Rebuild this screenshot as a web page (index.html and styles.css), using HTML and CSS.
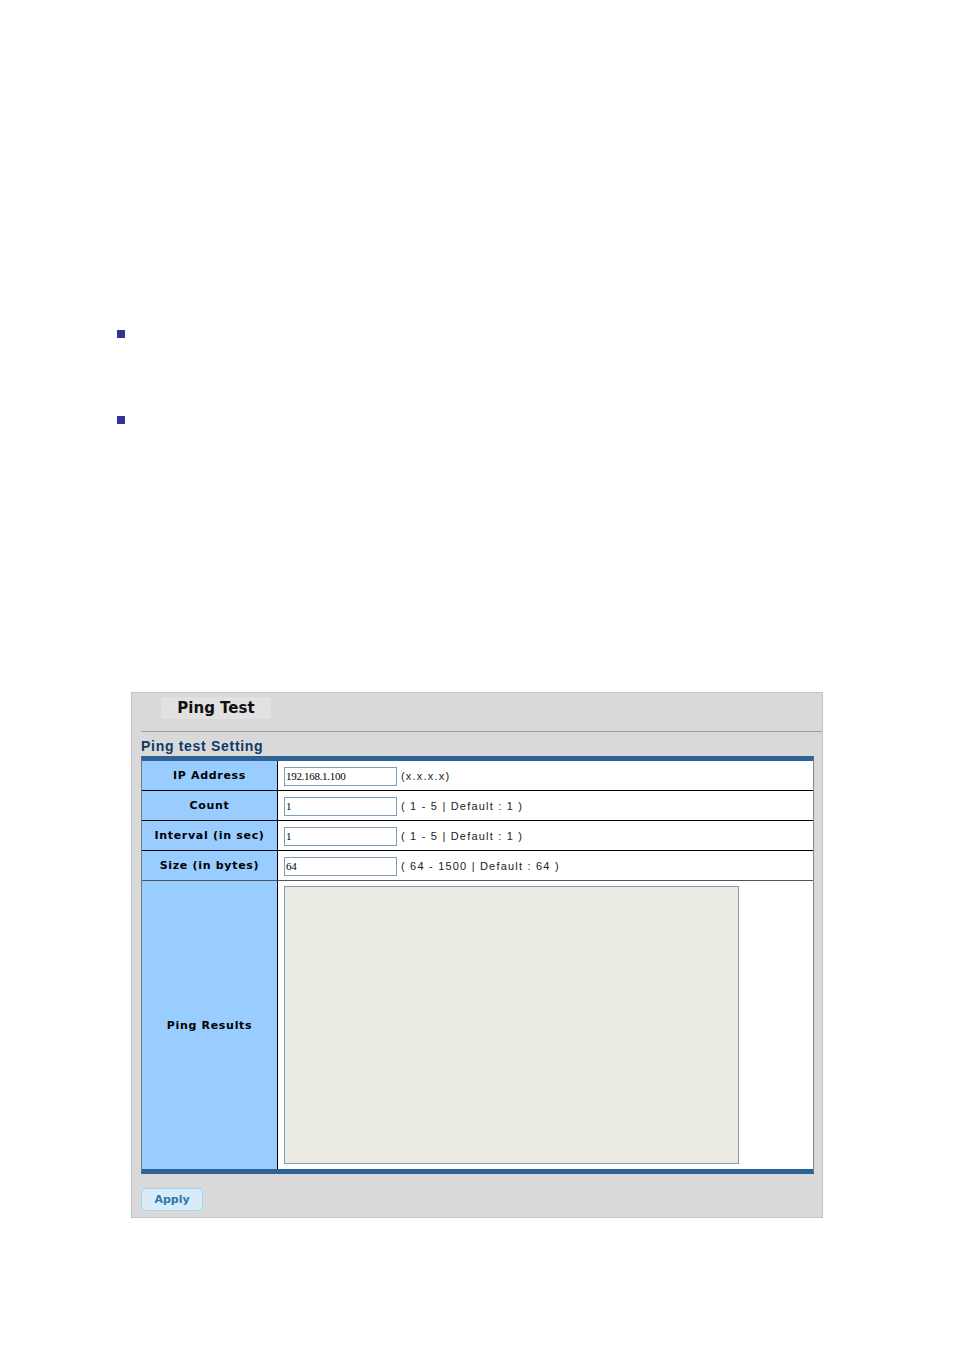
FILE: index.html
```html
<!DOCTYPE html>
<html>
<head>
<meta charset="utf-8">
<link rel="stylesheet" href="styles.css">
</head>
<body>
<div class="page">
  <div class="bullets">
    <span class="bullet"></span>
    <span class="bullet"></span>
  </div>
  <div class="panel">
    <div class="tab">Ping Test</div>
    <div class="sep"></div>
    <div class="heading">Ping test Setting</div>
    <table class="grid">
      <tr>
        <td class="lbl">IP Address</td>
        <td class="val"><input class="fld" type="text" value="192.168.1.100"><span class="hint">(x.x.x.x)</span></td>
      </tr>
      <tr>
        <td class="lbl">Count</td>
        <td class="val"><input class="fld" type="text" value="1"><span class="hint">( 1 - 5 | Default : 1 )</span></td>
      </tr>
      <tr>
        <td class="lbl">Interval (in sec)</td>
        <td class="val"><input class="fld" type="text" value="1"><span class="hint">( 1 - 5 | Default : 1 )</span></td>
      </tr>
      <tr class="pre">
        <td class="lbl">Size (in bytes)</td>
        <td class="val"><input class="fld" type="text" value="64"><span class="hint">( 64 - 1500 | Default : 64 )</span></td>
      </tr>
      <tr class="last">
        <td class="lbl">Ping Results</td>
        <td class="val res"><textarea class="out"></textarea></td>
      </tr>
    </table>
    <button class="apply" type="button">Apply</button>
  </div>
</div>
</body>
</html>
```
FILE: styles.css
```css
html, body {
  margin: 0;
  padding: 0;
  background: #ffffff;
}
.page {
  padding-top: 330px;
  font-family: "DejaVu Sans", Verdana, sans-serif;
}
.bullets {
  margin-left: 117px;
  display: flex;
  flex-direction: column;
  gap: 78px;
}
.bullet {
  display: block;
  width: 8px;
  height: 8px;
  background: #333399;
}
.panel {
  margin-top: 268px;
  margin-left: 131px;
  width: 690px;
  background: #d9d9d9;
  border: 1px solid #c4c4c4;
  display: flex;
  flex-direction: column;
  align-items: flex-start;
}
.tab {
  margin-top: 4px;
  margin-left: 29px;
  width: 110px;
  height: 22px;
  line-height: 22px;
  background: #e1e1e1;
  text-align: center;
  font-family: "DejaVu Sans", Verdana, sans-serif;
  font-weight: bold;
  font-size: 15px;
  color: #111;
}
.sep {
  margin-top: 12px;
  margin-left: 9px;
  align-self: stretch;
  height: 1px;
  background: #9a9a9a;
}
.heading {
  margin-left: 9px;
  height: 20px;
  padding-top: 4px;
  line-height: 20px;
  font-family: "Liberation Sans", Arial, sans-serif;
  font-weight: bold;
  font-size: 14px;
  letter-spacing: 0.7px;
  color: #0c3b66;
}
.grid {
  margin-left: 9px;
  width: 673px;
  border-collapse: separate;
  border-spacing: 0;
  border-top: 5px solid #2e6195;
  border-bottom: 5px solid #2e6195;
  border-left: 1px solid #7a7a7a;
  border-right: 1px solid #8a8a8a;
  background: #ffffff;
}
.grid td {
  padding: 0;
  height: 29px;
  border-bottom: 1px solid #000;
  vertical-align: middle;
}
.grid tr.pre td {
  border-bottom-color: #555;
}
.grid tr.last td {
  border-bottom: none;
  height: 288px;
}
.lbl {
  width: 135px;
  background: #99ccff;
  border-right: 1px solid #000;
  text-align: center;
  font-family: "DejaVu Sans", Verdana, sans-serif;
  font-weight: bold;
  font-size: 11px;
  letter-spacing: 0.7px;
  color: #000;
}
.val {
  padding-left: 6px !important;
  white-space: nowrap;
}
.fld {
  box-sizing: border-box;
  width: 113px;
  height: 19px;
  margin: 0;
  padding: 0 1px;
  border: 1px solid #7f9db9;
  background: #fff;
  font-family: "Liberation Serif", "Times New Roman", serif;
  font-size: 11px;
  letter-spacing: -0.3px;
  color: #000;
  vertical-align: middle;
  outline: none;
}
.hint {
  margin-left: 4px;
  font-family: "Liberation Sans", Arial, sans-serif;
  font-size: 11px;
  letter-spacing: 1.2px;
  color: #222;
  vertical-align: middle;
}
.res {
  padding-top: 5px !important;
  padding-bottom: 5px !important;
  vertical-align: top !important;
  box-sizing: border-box;
}
.out {
  display: block;
  box-sizing: border-box;
  width: 455px;
  height: 278px;
  margin: 0;
  padding: 0;
  border: 1px solid #7f9db9;
  background: #ebeae3;
  resize: none;
  outline: none;
}
.apply {
  margin-top: 14px;
  margin-left: 9px;
  margin-bottom: 6px;
  width: 62px;
  height: 23px;
  padding: 0;
  background: #d8ebf9;
  border: 1px solid #a9d1ef;
  border-radius: 4px;
  font-family: "DejaVu Sans", Verdana, sans-serif;
  font-weight: bold;
  font-size: 11px;
  color: #2c78ae;
  cursor: pointer;
}
```
